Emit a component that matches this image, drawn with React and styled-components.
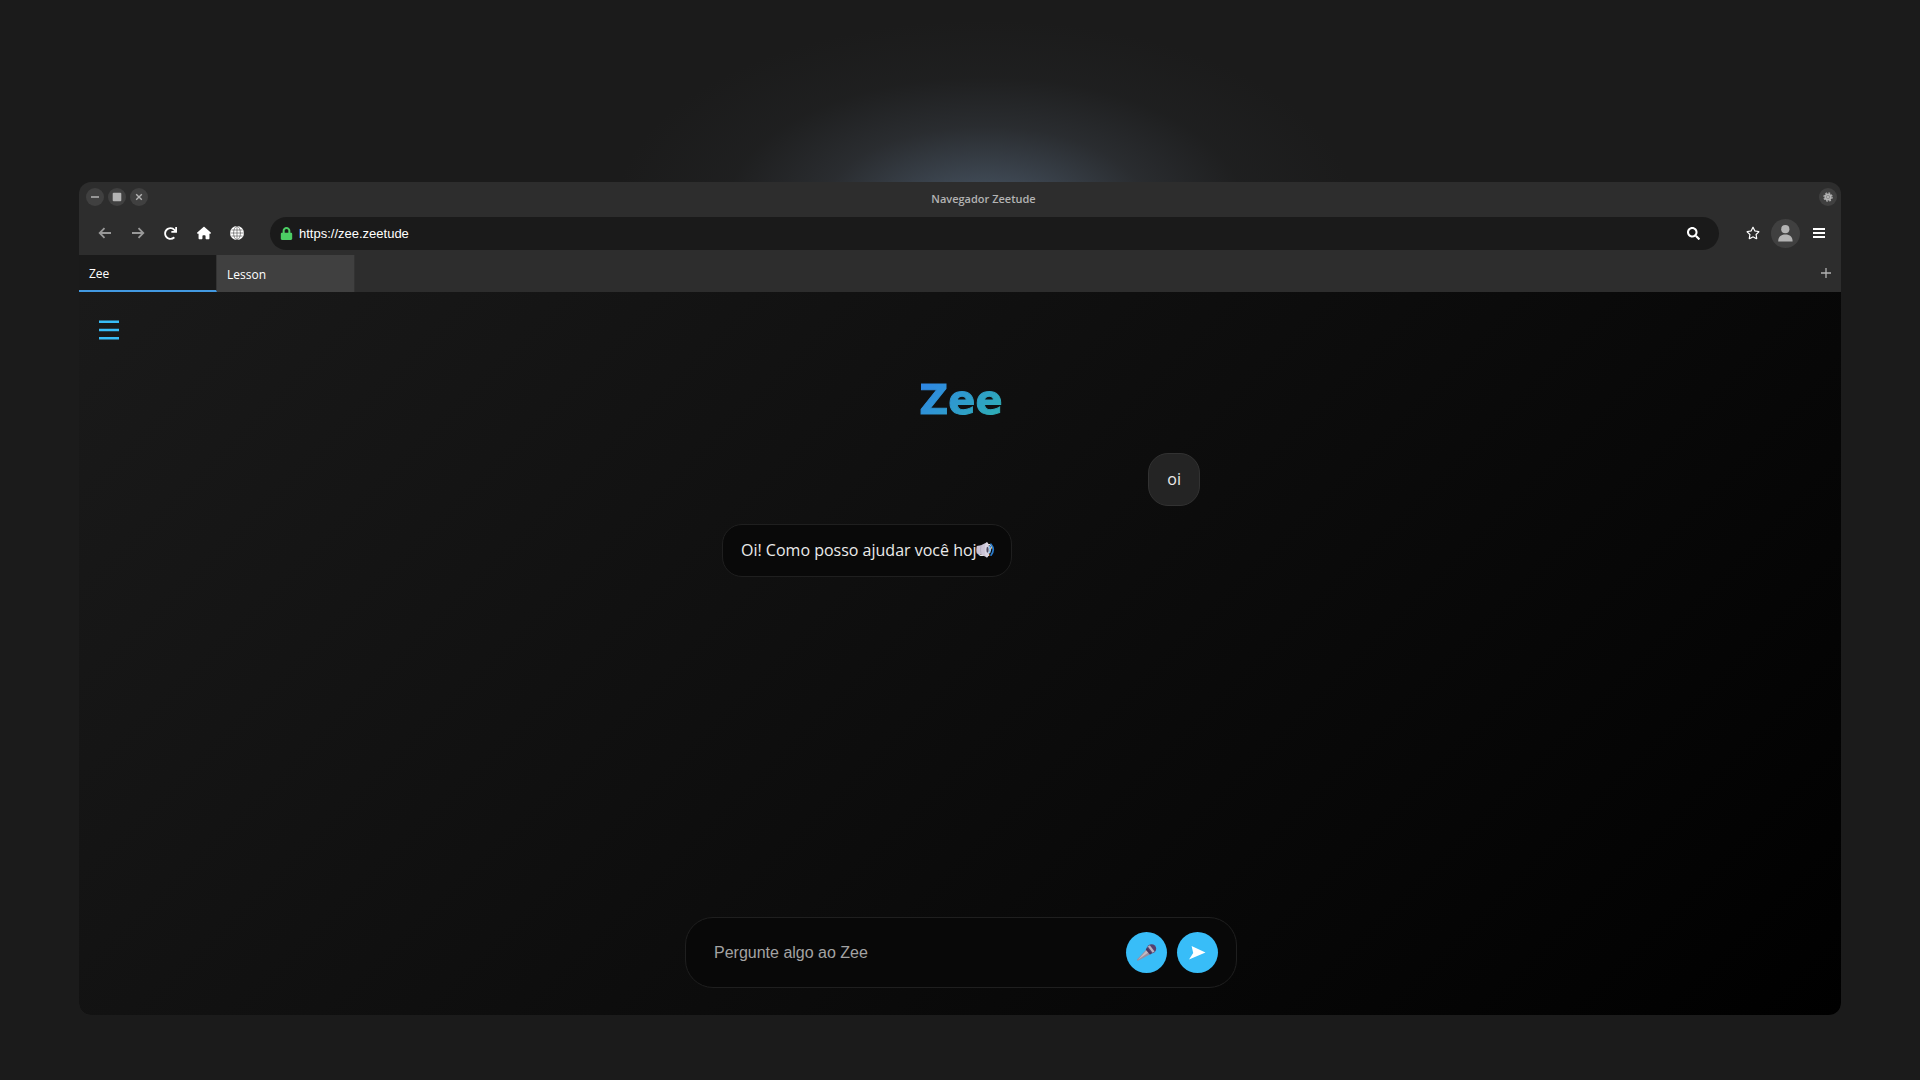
import React from "react";
import styled, { createGlobalStyle, css } from "styled-components";
import { FaLock, FaSearch, FaRegStar, FaRedo } from "react-icons/fa";
import { FaHouse } from "react-icons/fa6";

const Global = createGlobalStyle`
  * { box-sizing: border-box; }
  body { margin: 0; background: #1b1b1b; font-family: "Open Sans", "Noto Sans", sans-serif; color: #fff; }
  button, input { font: inherit; color: inherit; }
  button { cursor: pointer; border: 0; padding: 0; background: none; }
`;

const Desktop = styled.main`
  min-height: 100vh;
  display: flex;
  padding: 182px 79px 65px;
  background:
    radial-gradient(ellipse 370px 190px at 985px 210px, rgba(76, 92, 108, 0.9) 0%, rgba(72, 84, 98, 0.7) 20%, rgba(66, 73, 82, 0.38) 44%, rgba(56, 61, 66, 0.12) 70%, transparent 100%),
    #1b1b1b;
`;

const Window = styled.section`
  flex: 1;
  display: flex;
  flex-direction: column;
  border-radius: 12px;
  overflow: hidden;
  background: #2d2d2d;
`;

const TitleBar = styled.header`
  display: flex;
  height: 34px;
  padding: 6px 4px 0 7px;
`;

const Group = styled.div`
  display: flex;
  align-items: flex-start;
  gap: 4px;
`;

const Title = styled.h1`
  flex: 1;
  margin: 0;
  text-align: center;
  font-size: 11px;
  line-height: 22px;
  font-weight: 600;
  color: #b3b3b3;
`;

const RoundButton = styled.button`
  display: grid;
  place-items: center;
  width: 18px;
  height: 18px;
  border-radius: 50%;
  background: #404040;
  color: #b3b3b3;
`;

const NavBar = styled.nav`
  display: flex;
  align-items: center;
  height: 39px;
  padding: 0 8px 5px 11px;
`;

const NavButton = styled.button`
  display: grid;
  place-items: center;
  width: 29px;
  height: 29px;
  margin-right: 4px;
  border-radius: 50%;
  font-size: ${(p) => (p.$small ? "13px" : "14px")};
  color: ${(p) => (p.disabled ? "#999" : "#fff")};
  &:last-child { margin-right: 0; }
  ${(p) => p.$filled && css`background: #404040; color: #b3b3b3;`}
`;

const Address = styled.div`
  flex: 1;
  display: flex;
  align-items: center;
  gap: 6px;
  height: 33px;
  margin: 0 19px 0 15px;
  padding: 0 11px 0 10px;
  border-radius: 17px;
  background: #1a1a1a;
  font-size: 13px;
`;

const AddressInput = styled.input`
  flex: 1;
  min-width: 0;
  border: 0;
  outline: 0;
  padding: 0;
  background: transparent;
  font-family: "Liberation Sans", Arial, sans-serif;
  font-size: 13px;
`;

const TabBar = styled.div`
  display: flex;
  height: 37px;
`;

const Tab = styled.button`
  width: 138px;
  padding: 1px 10px 0;
  text-align: left;
  font-size: 12px;
  background: ${(p) => (p.$active ? "#1a1a1a" : "#404040")};
  border-right: 1px solid #333;
  border-bottom: ${(p) => (p.$active ? "2px solid #4299e1" : "0")};
`;

const NewTab = styled.button`
  width: 30px;
  margin-left: auto;
  padding-bottom: 2px;
  display: grid;
  place-items: center;
  color: #b3b3b3;
`;

const Content = styled.div`
  flex: 1;
  display: grid;
  grid-template-columns: 60px minmax(0, 1fr) 60px;
  background: linear-gradient(135deg, #1a1a1a 0%, #000 100%);
`;

const MenuButton = styled.button`
  align-self: start;
  display: grid;
  place-items: center;
  width: 60px;
  height: 76px;
  color: #38bdf8;
`;

const Chat = styled.div`
  display: flex;
  flex-direction: column;
  align-items: center;
  padding: 76px 0 27px 2px;
`;

const Brand = styled.h2`
  margin: 0 0 21px;
  font-family: "DejaVu Sans", sans-serif;
  font-size: 40px;
  line-height: 64px;
  font-weight: 700;
  color: transparent;
  -webkit-text-stroke: 1px transparent;
  background: linear-gradient(135deg, #2f80ed, #2eb5ac);
  background-clip: text;
  -webkit-background-clip: text;
`;

const Messages = styled.div`
  flex: 1;
  display: flex;
  flex-direction: column;
  gap: 18px;
  width: 478px;
  max-width: 100%;
`;

const Bubble = styled.p`
  position: relative;
  align-self: ${(p) => (p.$mine ? "flex-end" : "flex-start")};
  margin: 0;
  padding: 13px 18px;
  border: 1px solid ${(p) => (p.$mine ? "#323232" : "#1f1f1f")};
  border-radius: 20px;
  background: ${(p) => (p.$mine ? "#242424" : "#090909")};
  font-family: "Open Sans", sans-serif;
  font-size: 16px;
  line-height: 25px;
  font-weight: 500;
  color: #ebebeb;
`;

const Speak = styled.button`
  position: absolute;
  right: 16px;
  top: 16px;
  display: grid;
`;

const Composer = styled.form`
  display: flex;
  align-items: center;
  gap: 10px;
  width: 552px;
  max-width: 100%;
  height: 71px;
  padding: 0 18px 0 28px;
  border: 1px solid #1f1f1f;
  border-radius: 28px;
  background: #080808;
`;

const Prompt = styled.input`
  flex: 1;
  min-width: 0;
  padding: 0;
  border: 0;
  outline: 0;
  background: transparent;
  font-family: "Liberation Sans", Arial, sans-serif;
  font-size: 16px;
  &::placeholder { color: #a3a3a3; opacity: 1; }
`;

const ActionButton = styled.button`
  display: grid;
  place-items: center;
  width: 41px;
  height: 41px;
  border-radius: 50%;
  background: #38bdf8;
  color: #fff;
`;

const Line = ({ d, size, width = 1 }) => (
  <svg width={size} height={size} viewBox={`0 0 ${size} ${size}`} fill="none" stroke="currentColor" strokeWidth={width} aria-hidden="true">
    <path d={d} />
  </svg>
);

const Globe = () => (
  <svg width="14" height="14" viewBox="0 0 14 14" aria-hidden="true">
    <circle cx="7" cy="7" r="7" fill="#fff" />
    <g fill="none" stroke="#2d2d2d" strokeWidth=".5">
      <ellipse cx="7" cy="7" rx="3.4" ry="6.6" />
      <path d="M7 .2v13.6M.2 7h13.6M1.5 4h11M1.5 10h11" />
    </g>
  </svg>
);

const Gear = () => (
  <svg width="10" height="10" viewBox="-5 -5 10 10" aria-hidden="true">
    <circle r="3.6" fill="currentColor" />
    <circle r="4.1" fill="none" stroke="currentColor" strokeWidth="1.2" strokeDasharray="1.8 1.42" />
    <circle r="1.7" fill="none" stroke="#777" strokeWidth=".6" />
  </svg>
);

const Person = () => (
  <svg width="15" height="17" viewBox="0 0 15 17" fill="#b3b3b3" aria-hidden="true">
    <circle cx="7.3" cy="4.2" r="4.1" />
    <path d="M.2 16.4C.2 12 2.8 9.5 7.4 9.5s7.2 2.5 7.2 6.9z" />
  </svg>
);

const Speaker = () => (
  <svg width="19" height="18" viewBox="0 0 19 18" aria-hidden="true">
    <path d="M.8 5Q-.2 9 .8 12.600L5 13.400 11 16.600Q12 9 11 1.200L5 4.300z" fill="#cbc4d6" />
    <path d="M5 4.7Q4 9 5 12.8" stroke="#aaa2b8" fill="none" strokeWidth=".7" />
    <ellipse cx="11" cy="8.8" rx="2.2" ry="7.6" fill="#d9d4e2" />
    <ellipse cx="11.5" cy="8.8" rx="1.1" ry="3" fill="#504a60" />
    <g fill="none" stroke="#2878c8" strokeWidth="1.7" strokeLinecap="round">
      <path d="M13.5 5.9Q15 8.8 13.5 11.7" stroke="#8ec7f5" />
      <path d="M15 3.2Q19.5 8.5 15 14.2" />
    </g>
  </svg>
);

const Mic = () => (
  <svg width="21" height="19" viewBox="0 0 21 19" aria-hidden="true">
    <path d="M10.5 6.2 14.8 11 2.4 17.6Q.8 18 1 16.4z" fill="#998ea0" />
    <path d="M10.8 7 12.8 9.2 2 16.8z" fill="#c4b8bf" />
    <circle cx="15.6" cy="5.8" r="4.6" fill="#55406f" />
    <path d="M11.8 3.6 13.8 2.2 18.6 8.6 16.6 9.8z" fill="#b9b0bc" />
    <path d="M10.8 4.6 15.8 10.7 13.8 11.4 9.8 6.7z" fill="#49365e" />
  </svg>
);

export default function App() {
  return (
    <>
      <Global />
      <Desktop>
        <Window aria-label="Navegador Zeetude">
          <TitleBar>
            <Group>
              <RoundButton aria-label="Minimizar"><Line size={10} d="M1 5h8" width={1.4} /></RoundButton>
              <RoundButton aria-label="Maximizar">
                <svg width="10" height="10" aria-hidden="true"><rect x=".7" y=".7" width="8.6" height="8.6" rx="1" fill="currentColor" /></svg>
              </RoundButton>
              <RoundButton aria-label="Fechar"><Line size={10} d="M2.2 2.2l5.6 5.6M7.8 2.2l-5.6 5.6" width={1.4} /></RoundButton>
            </Group>
            <Title>Navegador Zeetude</Title>
            <Group><RoundButton aria-label="Configurações"><Gear /></RoundButton></Group>
          </TitleBar>
          <NavBar>
            <NavButton disabled aria-label="Voltar"><Line size={14} d="M13 7H2M6.5 2.2L1.7 7l4.8 4.8" width={1.8} /></NavButton>
            <NavButton disabled aria-label="Avançar"><Line size={14} d="M1 7h11M7.5 2.2L12.3 7l-4.8 4.8" width={1.8} /></NavButton>
            <NavButton $small aria-label="Recarregar"><FaRedo /></NavButton>
            <NavButton aria-label="Início"><FaHouse /></NavButton>
            <NavButton aria-label="Web"><Globe /></NavButton>
            <Address>
              <FaLock color="#4ccd64" aria-hidden="true" />
              <AddressInput aria-label="Endereço" defaultValue="https://zee.zeetude" />
              <NavButton $small aria-label="Pesquisar"><FaSearch /></NavButton>
            </Address>
            <NavButton aria-label="Favoritar"><FaRegStar /></NavButton>
            <NavButton $filled aria-label="Perfil"><Person /></NavButton>
            <NavButton aria-label="Menu"><Line size={12} d="M0 2h12M0 6h12M0 10h12" width={2} /></NavButton>
          </NavBar>
          <TabBar>
            <Tab $active>Zee</Tab>
            <Tab>Lesson</Tab>
            <NewTab aria-label="Nova aba"><Line size={12} d="M6 1v10M1 6h10" width={1.3} /></NewTab>
          </TabBar>
          <Content>
            <MenuButton aria-label="Abrir menu"><Line size={20} d="M0 1.7h20M0 10h20M0 18.3h20" width={2.4} /></MenuButton>
            <Chat>
              <Brand>Zee</Brand>
              <Messages>
                <Bubble $mine>oi</Bubble>
                <Bubble>
                  Oi! Como posso ajudar você hoje?
                  <Speak aria-label="Ouvir"><Speaker /></Speak>
                </Bubble>
              </Messages>
              <Composer onSubmit={(e) => e.preventDefault()}>
                <Prompt aria-label="Mensagem" placeholder="Pergunte algo ao Zee" />
                <ActionButton type="button" aria-label="Falar"><Mic /></ActionButton>
                <ActionButton aria-label="Enviar">
                  <svg width="17" height="14" viewBox="0 0 17 14" fill="currentColor" aria-hidden="true"><path d="M2.6 0 16.5 6.5 0 13.5 4.2 7z" /></svg>
                </ActionButton>
              </Composer>
            </Chat>
          </Content>
        </Window>
      </Desktop>
    </>
  );
}
